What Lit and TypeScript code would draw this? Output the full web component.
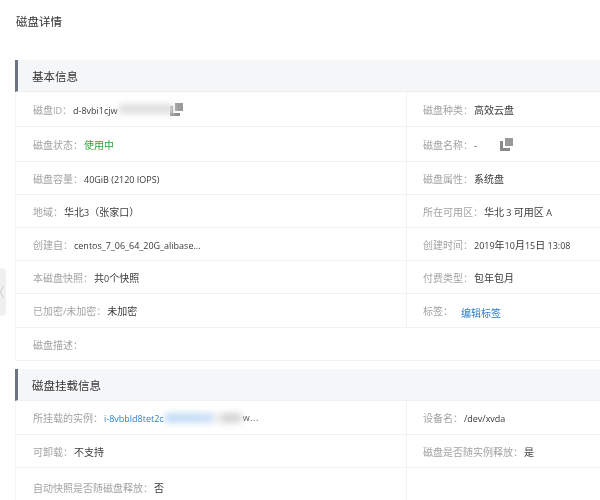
import { LitElement, html, css } from "lit";
import { customElement } from "lit/decorators.js";

type Cell = { l: string; v?: string; cls?: string; smudge?: string; tail?: string; copy?: boolean; gap?: boolean };
type Row = { h: number; a: Cell; b?: Cell; bEmpty?: boolean };

const basic: Row[] = [
  { h: 35, a: { l: "磁盘ID：", v: "d-8vbi1cjw", smudge: "grey", copy: true }, b: { l: "磁盘种类：", v: "高效云盘" } },
  { h: 35, a: { l: "磁盘状态：", v: "使用中", cls: "green" }, b: { l: "磁盘名称：", v: "-", copy: true, gap: true } },
  { h: 33, a: { l: "磁盘容量：", v: "40GiB (2120 IOPS)" }, b: { l: "磁盘属性：", v: "系统盘" } },
  { h: 33, a: { l: "地域：", v: "华北3（张家口）" }, b: { l: "所在可用区：", v: "华北 3 可用区 A" } },
  { h: 33, a: { l: "创建自：", v: "centos_7_06_64_20G_alibase..." }, b: { l: "创建时间：", v: "2019年10月15日 13:08" } },
  { h: 33, a: { l: "本磁盘快照：", v: "共0个快照" }, b: { l: "付费类型：", v: "包年包月" } },
  { h: 34, a: { l: "已加密/未加密：", v: "未加密" }, b: { l: "标签：", v: "编辑标签", cls: "blue tag" } },
  { h: 33, a: { l: "磁盘描述：" } },
];
const mount: Row[] = [
  { h: 34, a: { l: "所挂载的实例：", v: "i-8vbbld8tet2c", cls: "blue", smudge: "blue", tail: "w..." }, b: { l: "设备名：", v: "/dev/xvda" } },
  { h: 33, a: { l: "可卸载：", v: "不支持" }, b: { l: "磁盘是否随实例释放：", v: "是" } },
  { h: 40, a: { l: "自动快照是否随磁盘释放：", v: "否" }, bEmpty: true },
];

// Latin runs are drawn a little smaller than the CJK text around them.
const runs = (s: string) =>
  s.split(/([\x20-\x7e]+)/).map((p, i) => (i % 2 ? html`<span class="lat">${p}</span>` : p));

@customElement("app-root")
export class AppRoot extends LitElement {
  static styles = css`
    :host {
      display: block;
      width: 600px;
      height: 500px;
      overflow: hidden;
      background: #fff;
      font-family: "Noto Sans CJK SC", "Noto Sans", sans-serif;
      font-size: 10px;
      color: #333;
      position: relative;
    }
    .page {
      padding: 12px 0 0 15px;
      filter: blur(0.45px);
    }
    .title {
      height: 48px;
      font-size: 11.5px;
      line-height: 18px;
      padding-left: 1px;
      color: #333;
    }
    .section { margin-bottom: 8px; }
    .head {
      height: 32px;
      box-sizing: border-box;
      display: flex;
      align-items: center;
      padding-left: 14px;
      background: #f5f6f8;
      border-left: 3px solid #6b7280;
      border-bottom: 1px solid #eef0f2;
      font-size: 11.5px;
      color: #333;
    }
    .row {
      display: grid;
      grid-template-columns: 390px 1fr;
      box-sizing: border-box;
      border-left: 1px solid #f6f6f6;
      border-bottom: 1px solid #f2f2f2;
    }
    .cell {
      display: flex;
      align-items: center;
      padding-left: 17px;
      min-width: 0;
      white-space: nowrap;
    }
    .cell + .cell {
      border-left: 1px solid #f2f2f2;
      padding-left: 16px;
    }
    .lat { font-family: "Open Sans", sans-serif; font-size: 9px; }
    .label { color: #a3a3a3; }
    .value { color: #3a3a3a; white-space: pre; margin-left: 1px; }
    .green { color: #2aa53a; }
    .blue { color: #2b7fd0; }
    .value.tag { margin: 4px 0 0 8px; }
    .smudge {
      position: relative;
      z-index: 1;
      flex: none;
      width: 57px;
      height: 10px;
      margin: 0 -5px 0 0;
      border-radius: 6px;
      background: #dfdfe1;
      filter: blur(3px);
    }
    .smudge.blue {
      width: 79px;
      margin: 0;
      background: linear-gradient(90deg, #c4dcf5 0%, #c8def6 58%, #f4f4f4 66%, #d2d2d2 78%, #d8d8d8 100%);
    }
    .tail { color: #555; font-family: "Open Sans", sans-serif; font-size: 9px; letter-spacing: 0.5px; }
    .copy { display: block; flex: none; width: 13px; height: 13px; }
    .copy .front { fill: #999; }
    .copy .back { fill: #8a8a8a; }
    .copy.gap { margin-left: 23px; }
    .handle {
      position: absolute;
      left: 0;
      top: 268px;
      width: 6px;
      height: 48px;
      background: #f0f0f0;
      border-radius: 0 4px 4px 0;
      display: flex;
      align-items: center;
      filter: blur(0.45px);
    }
    .handle svg { display: block; width: 4px; height: 16px; fill: none; stroke: #d2d2d2; stroke-width: 1.2; }
  `;

  private copyIcon(gap?: boolean) {
    return html`<svg class="copy ${gap ? "gap" : ""}" viewBox="0 0 13 13" aria-hidden="true">
      <path class="back" d="M0 3h3v7h7v3H0z"></path>
      <path class="front" d="M5 0h8v8H5z"></path>
    </svg>`;
  }

  private cell(c: Cell) {
    return html`<div class="cell">
      <span class="label">${runs(c.l)}</span>
      ${c.v ? html`<span class="value ${c.cls ?? ""}">${runs(c.v)}</span>` : ""}
      ${c.smudge ? html`<span class="smudge ${c.smudge === "blue" ? "blue" : ""}"></span>` : ""}
      ${c.tail ? html`<span class="tail">${c.tail}</span>` : ""}
      ${c.copy ? this.copyIcon(c.gap) : ""}
    </div>`;
  }

  private section(title: string, rows: Row[]) {
    return html`<section class="section">
      <div class="head">${title}</div>
      ${rows.map(
        (r) => html`<div class="row" style="height:${r.h}px">
          ${this.cell(r.a)}
          ${r.b ? this.cell(r.b) : r.bEmpty ? html`<div class="cell"></div>` : ""}
        </div>`
      )}
    </section>`;
  }

  render() {
    return html`<div class="page">
        <div class="title">磁盘详情</div>
        ${this.section("基本信息", basic)}
        ${this.section("磁盘挂载信息", mount)}
      </div>
      <div class="handle">
        <svg viewBox="0 0 4 16" aria-hidden="true"><path d="M4 2 0 8l4 6"></path></svg>
      </div>`;
  }
}
